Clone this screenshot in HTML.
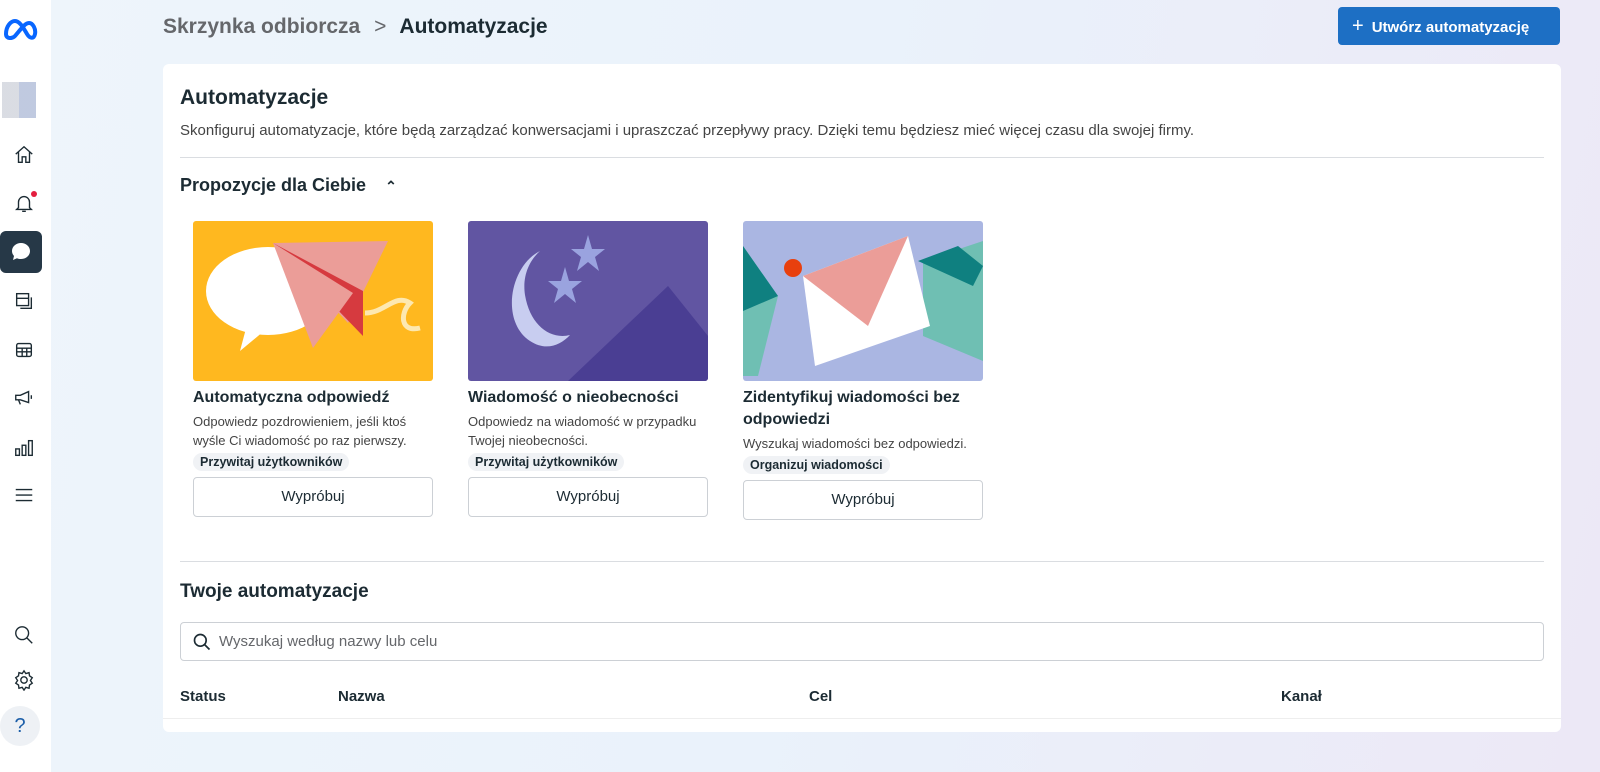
<!DOCTYPE html>
<html><head><meta charset="utf-8"><style>
*{box-sizing:border-box;margin:0;padding:0}
body{width:1600px;height:772px;overflow:hidden;font-family:"Liberation Sans",sans-serif;color:#1c2b33;background:linear-gradient(100deg,#eef5fb 0%,#eaf2fb 50%,#ece8f6 100%);position:relative}
.side{position:absolute;left:0;top:0;width:51px;height:772px;background:#fff}
.ic{position:absolute;left:6px;width:36px;height:36px;display:flex;align-items:center;justify-content:center}
.ic svg{width:22px;height:22px;fill:none;stroke:#1c2b33;stroke-width:1.5}
.card{position:absolute;left:163px;top:64px;width:1398px;height:668px;background:#fff;border-radius:6px}
.abs{position:absolute}
.h{font-size:21px;font-weight:bold}
.sub{font-size:15px;color:#444}
.sep{position:absolute;height:1px;background:#dadde1}
.sg{position:absolute;width:240px}
.sg .img{height:160px;border-radius:3px;overflow:hidden}
.sg .t{font-size:16px;font-weight:bold;margin-top:6px;line-height:22px}
.sg .d{font-size:13px;color:#444;line-height:19px;margin-top:3px}
.tag{display:inline-block;font-size:12.5px;font-weight:bold;background:#f0f2f5;border-radius:10px;padding:2px 7px;margin-top:3px}
.btn{height:40px;border:1px solid #ccd0d5;border-radius:4px;text-align:center;line-height:38px;font-size:15px;margin-top:6px}
.th{position:absolute;top:688px;font-size:15px;font-weight:bold}
</style></head><body>
<div class="side">
<svg class="abs" style="left:2px;top:18px" width="38" height="22" viewBox="0 0 38 22"><path d="M4 16c0-8 5-13 9-13 5 0 9 8 12 13 3 5 7 5 8 0 1-5-2-11-6-11-4 0-8 6-14 13-3 3-9 3-9-2z" fill="none" stroke="#0866ff" stroke-width="4"/></svg>
<div class="abs" style="left:2px;top:82px;width:34px;height:36px;background:linear-gradient(90deg,#d0d4dc 50%,#b0bcd8 50%);opacity:.8"></div>
<div class="ic" style="top:137px"><svg viewBox="0 0 24 24"><path d="M3 11l9-8 9 8M6 9v11h4v-6h4v6h4V9"/></svg></div>
<div class="ic" style="top:185px"><svg viewBox="0 0 24 24"><path d="M6 17V11a6 6 0 0112 0v6l2 2H4zM10 21h4"/></svg><span class="abs" style="left:25px;top:6px;width:6px;height:6px;background:#e41e3f;border-radius:50%"></span></div>
<div class="abs" style="left:0;top:231px;width:42px;height:42px;background:#263847;border-radius:6px"><svg class="abs" style="left:9px;top:9px" width="24" height="24" viewBox="0 0 24 24"><path d="M12 3c5 0 9 3.5 9 8s-4 8-9 8c-1.5 0-3-.3-4-.8L4 20l1-4C3.8 14.6 3 12.9 3 11c0-4.5 4-8 9-8z" fill="#fff"/></svg></div>
<div class="ic" style="top:283px"><svg viewBox="0 0 24 24"><rect x="4" y="4" width="13" height="13"/><path d="M4 9h13M20 8v12H8"/></svg></div>
<div class="ic" style="top:332px"><svg viewBox="0 0 24 24"><rect x="4" y="5" width="16" height="14" rx="2"/><path d="M4 10h16M4 14h16M10 10v9M15 10v9"/></svg></div>
<div class="ic" style="top:380px"><svg viewBox="0 0 24 24"><path d="M3 9h5l9-4v12l-9-3H3zM6 14l2 5M20 9v4"/></svg></div>
<div class="ic" style="top:430px"><svg viewBox="0 0 24 24"><rect x="3" y="13" width="4" height="7"/><rect x="10" y="9" width="4" height="11"/><rect x="17" y="4" width="4" height="16"/></svg></div>
<div class="ic" style="top:477px"><svg viewBox="0 0 24 24"><path d="M3 6h18M3 12h18M3 18h18"/></svg></div>
<div class="ic" style="top:617px"><svg viewBox="0 0 24 24"><circle cx="10" cy="10" r="7"/><path d="M15 15l6 6"/></svg></div>
<div class="ic" style="top:662px"><svg viewBox="0 0 24 24"><circle cx="12" cy="12" r="3.5"/><path d="M12 2l2 3 3.5-1 .5 3.5 3 2-2 3 2 3-3 2-.5 3.5-3.5-1-2 3-2-3-3.5 1-.5-3.5-3-2 2-3-2-3 3-2 .5-3.5 3.5 1z"/></svg></div>
<div class="abs" style="left:0;top:706px;width:40px;height:40px;border-radius:50%;background:#eef1f5;text-align:center;line-height:40px;font-size:20px;color:#1c5ea8">?</div>
</div>
<div class="abs" style="left:163px;top:15px;font-size:21px;font-weight:bold;color:#65676b">Skrzynka odbiorcza <span style="font-weight:normal;margin:0 8px">&gt;</span> <span style="color:#1c2b33">Automatyzacje</span></div>
<div class="abs" style="left:1338px;top:7px;width:222px;height:38px;background:#1d6fc4;border-radius:4px;color:#fff;font-size:15px;font-weight:bold;line-height:38px;padding-left:14px"><span style="font-size:20px;font-weight:normal;margin-right:8px">+</span>Utwórz automatyzację</div>
<div class="card">
<div class="abs h" style="left:17px;top:22px">Automatyzacje</div>
<div class="abs sub" style="left:17px;top:58px">Skonfiguruj automatyzacje, które będą zarządzać konwersacjami i upraszczać przepływy pracy. Dzięki temu będziesz mieć więcej czasu dla swojej firmy.</div>
<div class="sep" style="left:17px;top:93px;width:1364px"></div>
<div class="abs" style="left:17px;top:111px;font-size:18px;font-weight:bold">Propozycje dla Ciebie <span style="margin-left:14px;font-size:14px">&#8963;</span></div>
<div class="sg" style="left:30px;top:157px"><div class="img" style="background:#ffb81f"><svg width="240" height="160"><ellipse cx="75" cy="70" rx="62" ry="44" fill="#fff"/><path d="M55 100l-8 30 30-25z" fill="#fff"/><path d="M80 22l115-2-40 82z" fill="#eb9d98"/><path d="M80 22l90 48 0 45z" fill="#d63a3f"/><path d="M80 22l40 105 40-55z" fill="#eb9d98"/><path d="M172 92c20 0 30-20 45-10-10 10-10 30 10 25" stroke="#fde8b0" stroke-width="5" fill="none"/></svg></div>
<div class="t">Automatyczna odpowiedź</div><div class="d">Odpowiedz pozdrowieniem, jeśli ktoś wyśle Ci wiadomość po raz pierwszy.</div><span class="tag">Przywitaj użytkowników</span><div class="btn">Wypróbuj</div></div>
<div class="sg" style="left:305px;top:157px"><div class="img" style="background:#6155a2"><svg width="240" height="160"><path d="M72 30c-30 15-40 70-10 90 15 10 30 5 40-6-20 5-40-10-45-40-3-20 5-35 15-44z" fill="#c8cdf0"/><path d="M135 30l4 14 13 0-10 8 4 14-11-9-11 9 4-14-10-8 13 0z" fill="#9aa3df" transform="translate(-15 -16)"/><path d="M100 60l4 14 13 0-10 8 4 14-11-9-11 9 4-14-10-8 13 0z" fill="#9aa3df" transform="translate(-3 -14)"/><path d="M100 160l100-95 40 50v45z" fill="#4a3e93"/></svg></div>
<div class="t">Wiadomość o nieobecności</div><div class="d">Odpowiedz na wiadomość w przypadku Twojej nieobecności.</div><span class="tag">Przywitaj użytkowników</span><div class="btn">Wypróbuj</div></div>
<div class="sg" style="left:580px;top:157px"><div class="img" style="background:#aab6e2"><svg width="240" height="160"><path d="M0 25l35 50-20 80H0z" fill="#6fbfb3"/><path d="M0 25l35 50-35 15z" fill="#0f8080"/><path d="M180 40l60-20v120l-60-25z" fill="#6fbfb3"/><path d="M175 40l40-15 25 20-10 20z" fill="#0f8080"/><path d="M60 55l105-40 22 90-115 40z" fill="#fff"/><path d="M60 55l105-40-40 90z" fill="#eb9d98"/><circle cx="50" cy="47" r="9" fill="#e8400e"/></svg></div>
<div class="t">Zidentyfikuj wiadomości bez odpowiedzi</div><div class="d">Wyszukaj wiadomości bez odpowiedzi.</div><span class="tag">Organizuj wiadomości</span><div class="btn">Wypróbuj</div></div>
<div class="sep" style="left:17px;top:497px;width:1364px"></div>
<div class="abs" style="left:17px;top:517px;font-size:19px;font-weight:bold">Twoje automatyzacje</div>
<div class="abs" style="left:17px;top:558px;width:1364px;height:39px;border:1px solid #ccd0d5;border-radius:4px;font-size:15px;color:#65676b;line-height:37px;padding-left:38px"><svg class="abs" style="left:11px;top:9px" width="20" height="20" viewBox="0 0 24 24" fill="none" stroke="#1c2b33" stroke-width="2"><circle cx="10" cy="10" r="7"/><path d="M15 15l6 6"/></svg>Wyszukaj według nazwy lub celu</div>
<div class="sep" style="left:0;top:654px;width:1398px;background:#eee"></div>
</div>
<div class="th" style="left:180px">Status</div><div class="th" style="left:338px">Nazwa</div><div class="th" style="left:809px">Cel</div><div class="th" style="left:1281px">Kanał</div>
</body></html>
